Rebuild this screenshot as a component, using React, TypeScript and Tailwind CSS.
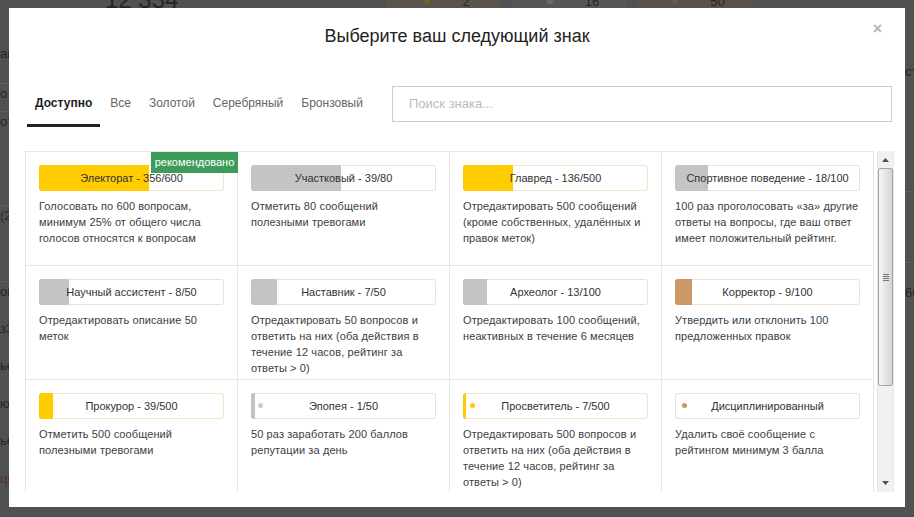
import React from 'react';

type Tier = 'gold' | 'silver' | 'bronze';

interface BadgeItem {
  name: string;
  progress?: [number, number];
  tier: Tier;
  desc: string;
  dot?: boolean;
  recommended?: boolean;
}

const badges: BadgeItem[] = [
  { name: 'Электорат', progress: [356, 600], tier: 'gold', recommended: true, desc: 'Голосовать по 600 вопросам, минимум 25% от общего числа голосов относятся к вопросам' },
  { name: 'Участковый', progress: [39, 80], tier: 'silver', desc: 'Отметить 80 сообщений полезными тревогами' },
  { name: 'Главред', progress: [136, 500], tier: 'gold', desc: 'Отредактировать 500 сообщений (кроме собственных, удалённых и правок меток)' },
  { name: 'Спортивное поведение', progress: [18, 100], tier: 'silver', desc: '100 раз проголосовать «за» другие ответы на вопросы, где ваш ответ имеет положительный рейтинг.' },
  { name: 'Научный ассистент', progress: [8, 50], tier: 'silver', desc: 'Отредактировать описание 50 меток' },
  { name: 'Наставник', progress: [7, 50], tier: 'silver', desc: 'Отредактировать 50 вопросов и ответить на них (оба действия в течение 12 часов, рейтинг за ответы > 0)' },
  { name: 'Археолог', progress: [13, 100], tier: 'silver', desc: 'Отредактировать 100 сообщений, неактивных в течение 6 месяцев' },
  { name: 'Корректор', progress: [9, 100], tier: 'bronze', desc: 'Утвердить или отклонить 100 предложенных правок' },
  { name: 'Прокурор', progress: [39, 500], tier: 'gold', desc: 'Отметить 500 сообщений полезными тревогами' },
  { name: 'Эпопея', progress: [1, 50], tier: 'silver', dot: true, desc: '50 раз заработать 200 баллов репутации за день' },
  { name: 'Просветитель', progress: [7, 500], tier: 'gold', dot: true, desc: 'Отредактировать 500 вопросов и ответить на них (оба действия в течение 12 часов, рейтинг за ответы > 0)' },
  { name: 'Дисциплинированный', tier: 'bronze', dot: true, desc: 'Удалить своё сообщение с рейтингом минимум 3 балла' },
];

const fillColor: Record<Tier, string> = {
  gold: 'bg-[#ffcc00]',
  silver: 'bg-[#c4c4c4]',
  bronze: 'bg-[#cc9966]',
};

const ringColor: Record<Tier, string> = {
  gold: 'shadow-[inset_0_0_0_1px_#f1e6c8]',
  silver: 'shadow-[inset_0_0_0_1px_#e3e3e3]',
  bronze: 'shadow-[inset_0_0_0_1px_#f2e0cd]',
};

const dotColor: Record<Tier, string> = {
  gold: 'bg-[#ffcc00]',
  silver: 'bg-[#cccccc]',
  bronze: 'bg-[#c99563]',
};

const tabs = ['Доступно', 'Все', 'Золотой', 'Серебряный', 'Бронзовый'];

// faded page behind the overlay
const leftStrip = [
  { h: 40, t: 'ак', line: true },
  { h: 28, t: 'о', line: true },
  { h: 94, t: 'от', line: true },
  { h: 76, t: '(2', line: true },
  { h: 37, t: 'ом' },
  { h: 37, t: 'з3' },
  { h: 38, t: 'ье' },
  { h: 37, t: 'ю' },
  { h: 38, t: 'ье' },
  { h: 40, t: 'цё', red: true },
];

function BadgeCell({ b }: { b: BadgeItem }) {
  const pct = b.progress ? (b.progress[0] / b.progress[1]) * 100 : 0;
  const label = b.progress ? `${b.name} - ${b.progress[0]}/${b.progress[1]}` : b.name;
  return (
    <div className="relative h-[114px] border-r border-b border-[#e6e6e6] px-[13px] pt-[13px]">
      {b.recommended && (
        <div className="absolute top-0 -right-px z-10 h-[21px] w-[87px] bg-[#3e9c5b] text-white text-[11px] leading-[21px] text-center">
          рекомендовано
        </div>
      )}
      <div className={`relative h-[26px] rounded-[3px] overflow-hidden flex items-center justify-center ${ringColor[b.tier]}`}>
        {pct > 0 && (
          <div className={`absolute left-0 top-0 bottom-0 ${fillColor[b.tier]}`} style={{ width: `${pct}%` }} />
        )}
        {b.dot && (
          <span className={`absolute left-[7px] top-[10px] w-[5px] h-[5px] rounded-full ${dotColor[b.tier]}`} />
        )}
        <span className="relative text-[11px] text-[#333]">{label}</span>
      </div>
      <p className="mt-[7px] text-[11px] tracking-[0.1px] leading-[16px] text-[#3b4045]">{b.desc}</p>
    </div>
  );
}

function Scrollbar() {
  return (
    <div className="ml-[3px] w-[17px] h-[341px] bg-[#f1f1f1] border-x border-[#e9e9e9] flex flex-col items-center">
      <div className="h-[17px] flex items-center justify-center">
        <svg width="7" height="4" viewBox="0 0 7 4"><path d="M0 4 L3.5 0 L7 4 Z" fill="#505050" /></svg>
      </div>
      <div className="w-[15px] h-[218px] rounded-[2px] border border-[#a3a3a3] bg-gradient-to-r from-[#f6f6f6] to-[#d4d4d4] flex flex-col items-center justify-center gap-[1px]">
        <span className="block w-[6px] h-px bg-[#777]" />
        <span className="block w-[6px] h-px bg-[#777]" />
        <span className="block w-[6px] h-px bg-[#777]" />
        <span className="block w-[6px] h-px bg-[#777]" />
      </div>
      <div className="flex-1" />
      <div className="h-[19px] flex items-center justify-center">
        <svg width="7" height="4" viewBox="0 0 7 4"><path d="M0 0 L3.5 4 L7 0 Z" fill="#505050" /></svg>
      </div>
    </div>
  );
}

function Backdrop() {
  return (
    <div className="flex flex-col h-full text-[#252525]">
      <div className="h-[8px] flex items-end overflow-hidden">
        <div className="ml-[105px] w-[281px] text-[24px] leading-[28px] -mb-[6px]">12 334</div>
        <div className="w-[114px] h-full bg-[#595548] flex justify-center gap-8 pl-2">
          <span className="mt-[-2px] w-[6px] h-[6px] rounded-full bg-[#6e6228]" />
          <span className="text-[13px] leading-[8px] -mt-[2px]">2</span>
        </div>
        <div className="ml-[12px] w-[114px] h-full bg-[#555658] flex justify-center gap-8 pl-2">
          <span className="mt-[-2px] w-[6px] h-[6px] rounded-full bg-[#6a6a6a]" />
          <span className="text-[13px] leading-[8px] -mt-[2px]">16</span>
        </div>
        <div className="ml-[11px] w-[115px] h-full bg-[#59514c] flex justify-center gap-8 pl-2">
          <span className="mt-[-2px] w-[6px] h-[6px] rounded-full bg-[#6e5a44]" />
          <span className="text-[13px] leading-[8px] -mt-[2px]">50</span>
        </div>
      </div>
      <div className="flex-1 flex justify-between">
        <div className="w-[9px] overflow-hidden flex flex-col pt-[36px] text-[13px]">
          {leftStrip.map((r, i) => (
            <div
              key={i}
              className={`shrink-0 whitespace-nowrap ${r.line ? 'border-b border-[#5c5d5f]' : ''} ${r.red ? 'text-[#5a2a2a]' : ''}`}
              style={{ height: r.h }}
            >
              {r.t}
            </div>
          ))}
        </div>
        <div className="w-[9px] overflow-hidden flex flex-col pt-[54px] text-[13px]">
          <div className="h-[130px] border-b border-[#5c5d5f]">ст</div>
          <div className="h-[71px] border-b border-[#5c5d5f]" />
          <div className="pt-[20px]">66</div>
        </div>
      </div>
    </div>
  );
}

export default function App() {
  return (
    <div className="relative w-[914px] h-[517px] overflow-hidden bg-[#505153] font-['Liberation_Sans',Arial,sans-serif]">
      <Backdrop />
      <div className="absolute left-[9px] top-[8px] w-[896px] h-[499px] bg-white">
        <div className="relative h-[56px] flex items-center justify-center">
          <h2 className="text-[18px] text-[#222]">Выберите ваш следующий знак</h2>
          <button className="absolute right-[23px] top-[13px] text-[16px] font-bold text-[#b5b5b5] leading-none">×</button>
        </div>

        <div className="mt-[22px] flex items-start pl-[18px] pr-[13px]">
          <div className="flex gap-[2px]">
            {tabs.map((t, i) => (
              <div
                key={t}
                className={`px-2 pt-[10px] pb-[13px] leading-[15px] text-[12px] border-b-[3px] ${
                  i === 0 ? 'border-[#222] font-bold text-[#222]' : 'border-transparent text-[#666]'
                }`}
              >
                {t}
              </div>
            ))}
          </div>
          <div className="ml-auto w-[500px] h-[36px] border border-[#cccccc] flex items-center px-4 text-[13px] text-[#bbbbbb]">
            Поиск знака...
          </div>
        </div>

        <div className="mt-[24px] ml-[16px] flex">
          <div className="w-[849px] h-[341px] overflow-hidden border-l border-t border-[#e6e6e6]">
            <div className="grid grid-cols-4">
              {badges.map((b) => (
                <BadgeCell key={b.name} b={b} />
              ))}
            </div>
          </div>
          <Scrollbar />
        </div>
      </div>
    </div>
  );
}
